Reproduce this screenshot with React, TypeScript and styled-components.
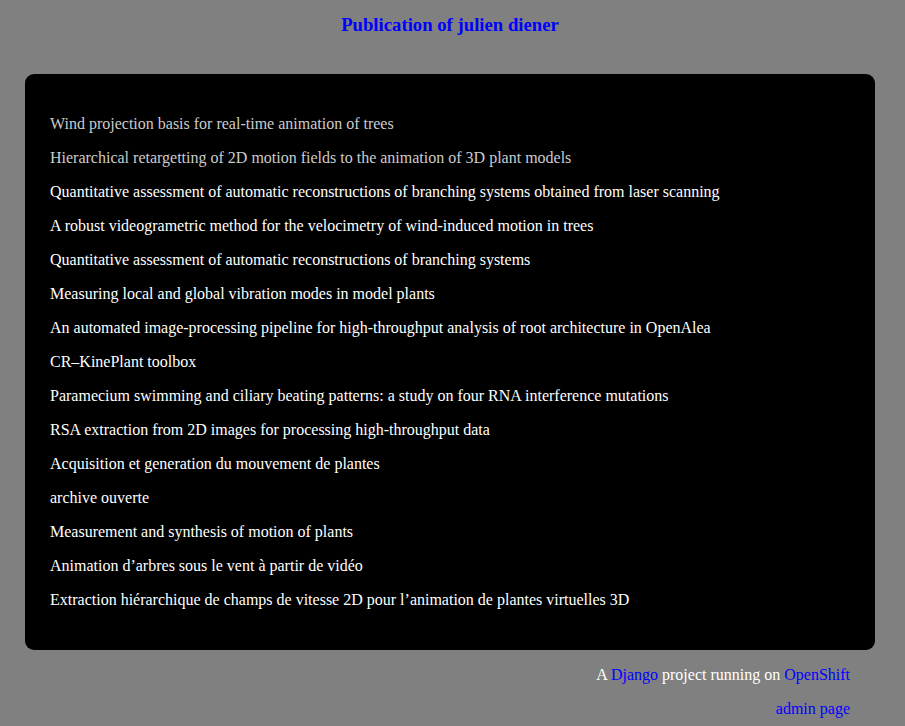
import React from "react";
import styled, { createGlobalStyle } from "styled-components";

const Global = createGlobalStyle`
  html, body { margin: 0; padding: 0; background: #808080; }
  body { font-family: "Liberation Serif", "Times New Roman", serif; font-size: 16px; }
`;

const Page = styled.div`
  display: flex;
  flex-direction: column;
  padding: 0 30px 0 25px;
`;

const Title = styled.h3`
  margin: 0;
  padding-top: 1px;
  height: 48px;
  line-height: 48px;
  text-align: center;
  font-size: 18.72px;
  font-weight: bold;
  color: #0000ff;
`;

const Panel = styled.div`
  margin-top: 25px;
  background: #000;
  border-radius: 9px;
  padding: 33px 25px;
  display: flex;
  flex-direction: column;
`;

const Item = styled.a<{ $visited?: boolean }>`
  display: block;
  height: 34px;
  line-height: 34px;
  color: ${(p) => (p.$visited ? "#cccccc" : "#ffffff")};
  text-decoration: none;
  white-space: nowrap;
`;

const Footer = styled.div`
  display: flex;
  flex-direction: column;
  align-items: flex-end;
  padding: 8px 25px 0 0;
`;

const FooterLine = styled.div`
  height: 34px;
  line-height: 34px;
  color: #ffffff;
`;

const Link = styled.a`
  color: #0000ff;
  text-decoration: none;
`;

const items: [string, boolean][] = [
  ["Wind projection basis for real-time animation of trees", true],
  ["Hierarchical retargetting of 2D motion fields to the animation of 3D plant models", true],
  ["Quantitative assessment of automatic reconstructions of branching systems obtained from laser scanning", false],
  ["A robust videogrametric method for the velocimetry of wind-induced motion in trees", false],
  ["Quantitative assessment of automatic reconstructions of branching systems", false],
  ["Measuring local and global vibration modes in model plants", false],
  ["An automated image-processing pipeline for high-throughput analysis of root architecture in OpenAlea", false],
  ["CR\u2013KinePlant toolbox", false],
  ["Paramecium swimming and ciliary beating patterns: a study on four RNA interference mutations", false],
  ["RSA extraction from 2D images for processing high-throughput data", false],
  ["Acquisition et generation du mouvement de plantes", false],
  ["archive ouverte", false],
  ["Measurement and synthesis of motion of plants", false],
  ["Animation d\u2019arbres sous le vent \u00e0 partir de vid\u00e9o", false],
  ["Extraction hi\u00e9rarchique de champs de vitesse 2D pour l\u2019animation de plantes virtuelles 3D", false],
];

export default function App() {
  return (
    <>
      <Global />
      <Page>
        <Title>Publication of julien diener</Title>
        <Panel>
          {items.map(([t, v], i) => (
            <Item key={i} href="#" $visited={v}>
              {t}
            </Item>
          ))}
        </Panel>
        <Footer>
          <FooterLine>
            A <Link href="#">Django</Link> project running on <Link href="#">OpenShift</Link>
          </FooterLine>
          <FooterLine>
            <Link href="#">admin page</Link>
          </FooterLine>
        </Footer>
      </Page>
    </>
  );
}
